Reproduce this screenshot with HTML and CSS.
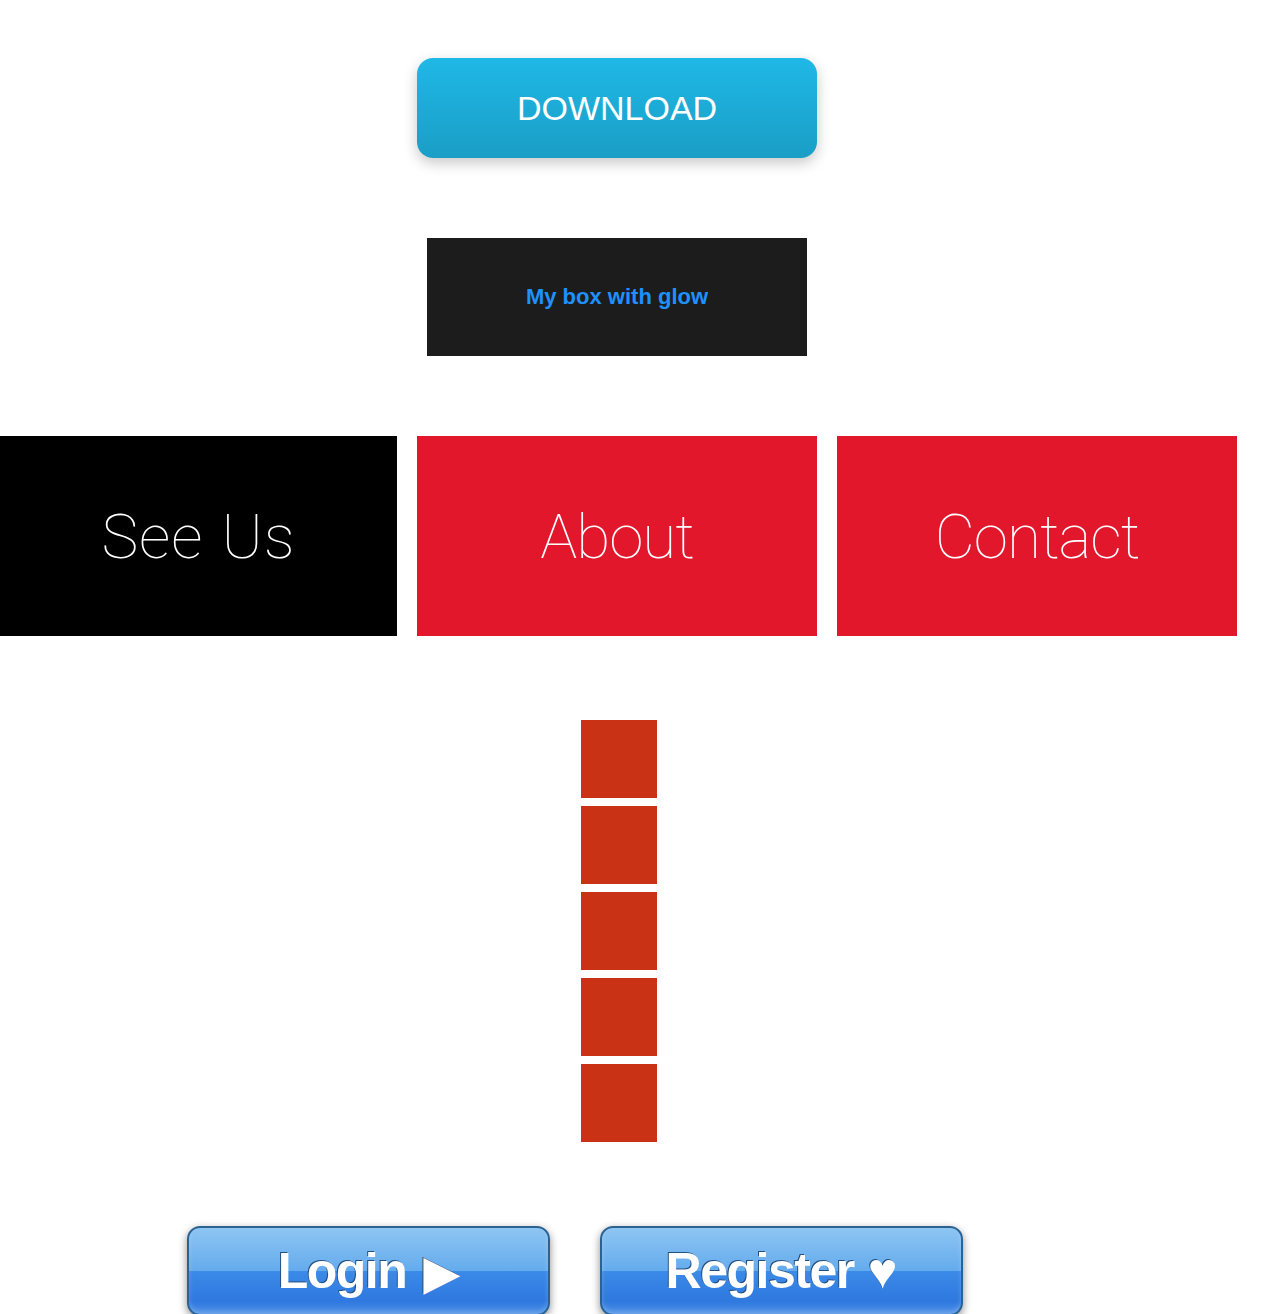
FILE: index.html
```html
<!DOCTYPE html>
<html>
<head>
<meta charset="utf-8">
<link rel="stylesheet" href="styles.css">
</head>
<body>
<div class="page">
  <a class="download">DOWNLOAD</a>
  <div class="glow-box">My box with glow</div>
  <div class="tiles">
    <div class="tile tile-black tile-wide">See Us</div>
    <div class="tile tile-red">About</div>
    <div class="tile tile-red">Contact</div>
  </div>
  <div class="squares">
    <div class="square"></div>
    <div class="square"></div>
    <div class="square"></div>
    <div class="square"></div>
    <div class="square"></div>
  </div>
  <div class="glossy-row">
    <a class="glossy">Login <span class="glyph-play">▶</span></a>
    <a class="glossy">Register <span class="glyph-heart">♥</span></a>
  </div>
</div>
</body>
</html>
```
FILE: styles.css
```css
html, body {
  margin: 0;
  padding: 0;
  background: #fff;
}
.page {
  width: 1234px;
  display: flex;
  flex-direction: column;
  align-items: center;
  padding-top: 58px;
  font-family: "Liberation Sans", Arial, sans-serif;
}
.download {
  width: 400px;
  height: 100px;
  box-sizing: border-box;
  border-radius: 16px;
  background: linear-gradient(#1fb8e6, #1a9ec6);
  box-shadow: 0 5px 14px rgba(0,0,0,0.22);
  color: #fff;
  font-size: 34px;
  display: flex;
  align-items: center;
  justify-content: center;
  margin-bottom: 80px;
}
.glow-box {
  width: 380px;
  height: 118px;
  background: #1c1c1c;
  color: #1e90ff;
  font-weight: bold;
  font-size: 22px;
  display: flex;
  align-items: center;
  justify-content: center;
  margin-bottom: 80px;
}
.tiles {
  align-self: flex-start;
  display: flex;
  gap: 20px;
  margin-bottom: 84px;
}
.tile {
  width: 400px;
  height: 200px;
  display: flex;
  align-items: center;
  justify-content: center;
  color: #fff;
  font-family: Roboto, "Liberation Sans", sans-serif;
  font-weight: 100;
  font-size: 62px;
  letter-spacing: -1px;
}
.tile-wide {
  letter-spacing: 1px;
  word-spacing: 2px;
}
.tile-black {
  width: 397px;
  background: #000;
}
.tile-red {
  background: #e3172c;
}
.squares {
  display: flex;
  flex-direction: column;
  gap: 8px;
  margin-left: 4px;
  margin-bottom: 84px;
}
.square {
  width: 76px;
  height: 78px;
  background: #c93215;
}
.glossy-row {
  align-self: flex-start;
  margin-left: 187px;
  display: flex;
  gap: 50px;
}
.glossy {
  width: 363px;
  height: 90px;
  box-sizing: border-box;
  border: 2px solid #2a6391;
  border-radius: 13px;
  background: linear-gradient(#8ec5f2 0%, #64abed 50%, #3b8ae8 50%, #2f78df 85%, #4a8fe6 100%);
  box-shadow: 0 3px 8px rgba(0,0,0,0.45), inset 0 -3px 5px rgba(255,255,255,0.2);
  color: #fff;
  font-weight: bold;
  font-size: 50px;
  letter-spacing: -1.5px;
  display: flex;
  align-items: baseline;
  justify-content: center;
  gap: 14px;
  padding-top: 14px;
  text-shadow: -1px -1px 0 #24507e;
}
.glyph-play {
  font-size: 45px;
  letter-spacing: 0;
  margin-left: 4px;
}
.glyph-heart {
  font-size: 50px;
  letter-spacing: 0;
}
```
